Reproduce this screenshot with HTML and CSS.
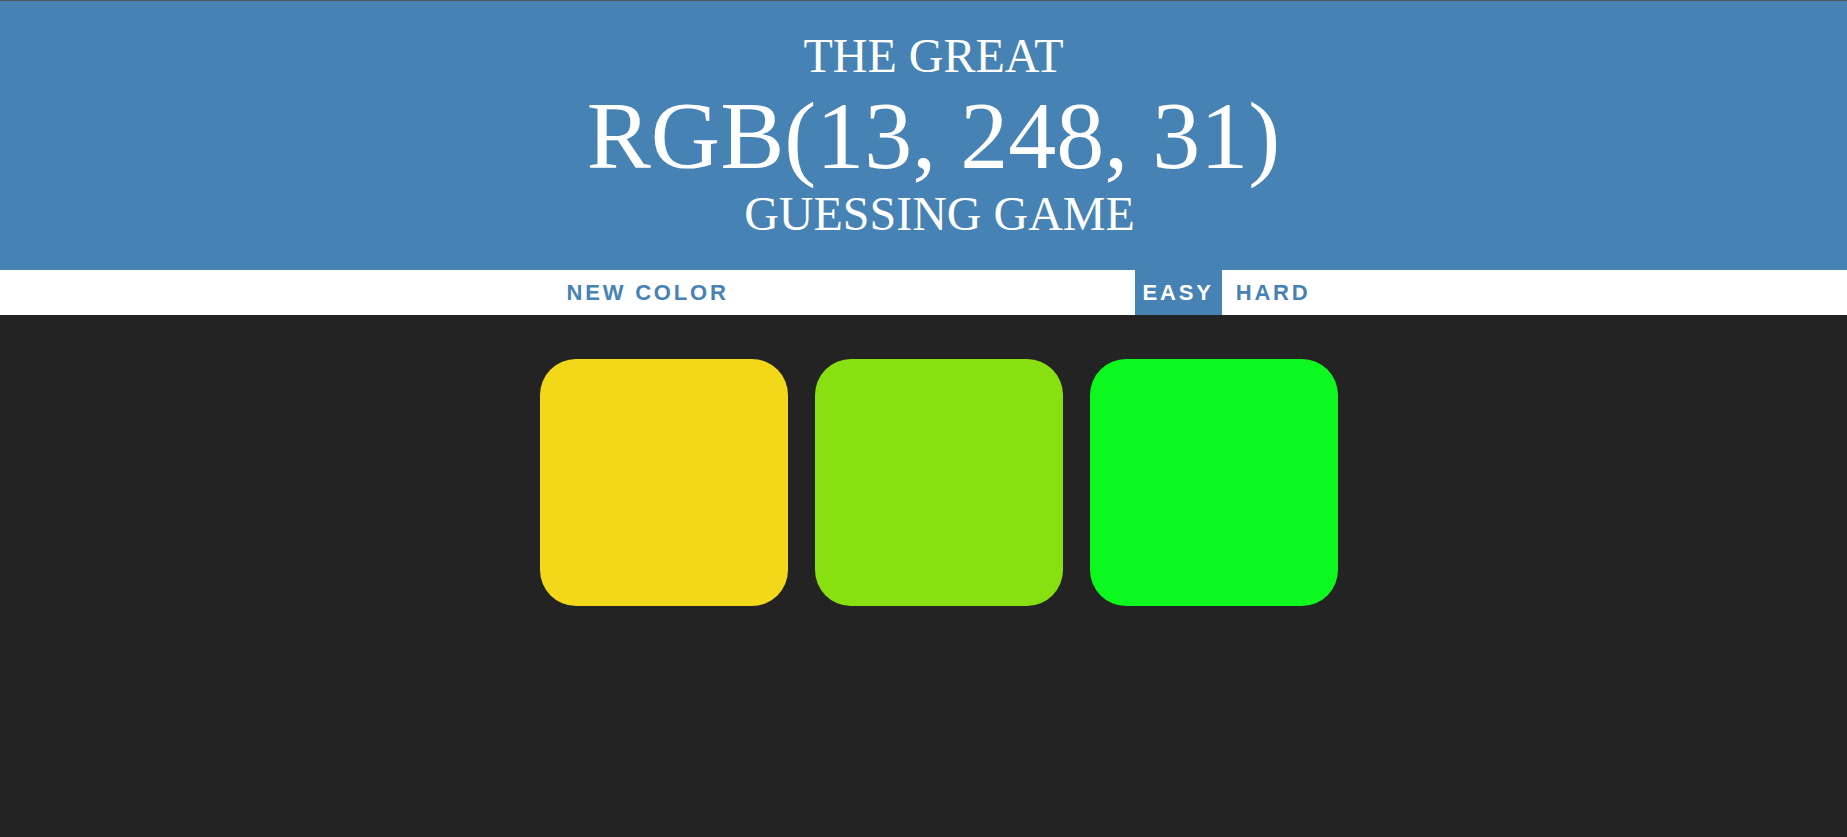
FILE: index.html
```html
<!DOCTYPE html>
<html lang="en">
<head>
<meta charset="utf-8">
<title>Color Game</title>
<link rel="stylesheet" href="styles.css">
</head>
<body>
  <header class="header">
    <h1 class="title">The Great<br><span class="color-display">RGB(13, 248, 31)</span><br><span class="subtitle">Guessing Game</span></h1>
  </header>
  <nav class="stripe">
    <button class="btn btn-reset">New Color</button>
    <span class="message"></span>
    <button class="btn mode selected">Easy</button>
    <button class="btn mode">Hard</button>
  </nav>
  <main class="board">
    <div class="grid">
      <div class="square sq-yellow"></div>
      <div class="square sq-lime"></div>
      <div class="square sq-green"></div>
    </div>
  </main>
</body>
</html>
```

FILE: styles.css
```css
html, body {
  margin: 0;
  padding: 0;
}

body {
  background: #232323;
  min-height: 837px;
  font-family: "Liberation Sans", Arial, sans-serif;
}

.header {
  background: #4682b4;
  border-top: 1px solid #555555;
}

.title {
  margin: 0;
  padding: 29px 0 29px 20px;
  color: #ffffff;
  font-family: "Liberation Serif", "Times New Roman", serif;
  font-weight: normal;
  font-size: 48px;
  line-height: 1.1;
  text-align: center;
  text-transform: uppercase;
}

.color-display {
  font-size: 200%;
}

.subtitle {
  padding-left: 12px;
}

.stripe {
  background: #ffffff;
  height: 45px;
  display: flex;
  justify-content: center;
  align-items: stretch;
  padding-left: 30px;
}

.btn {
  border: none;
  margin: 0;
  background: none;
  color: #4682b4;
  font-family: "Liberation Sans", Arial, sans-serif;
  font-weight: bold;
  font-size: 22px;
  letter-spacing: 2.8px;
  text-transform: uppercase;
  line-height: 45px;
  height: 45px;
  padding: 0 8px;
  cursor: pointer;
  outline: none;
}

.btn.selected {
  background: #4682b4;
  color: #ffffff;
}

.message {
  display: inline-block;
  width: 398px;
}

.mode + .mode {
  margin-left: 6px;
}

.board {
  padding-left: 30px;
}

.grid {
  width: 798px;
  margin: 44px auto 0;
  display: flex;
  gap: 27px;
}

.square {
  width: 248px;
  height: 247px;
  border-radius: 36px;
}

.sq-yellow { background: rgb(243, 216, 26); }
.sq-lime { background: rgb(136, 224, 16); }
.sq-green { background: rgb(13, 248, 31); }
```
